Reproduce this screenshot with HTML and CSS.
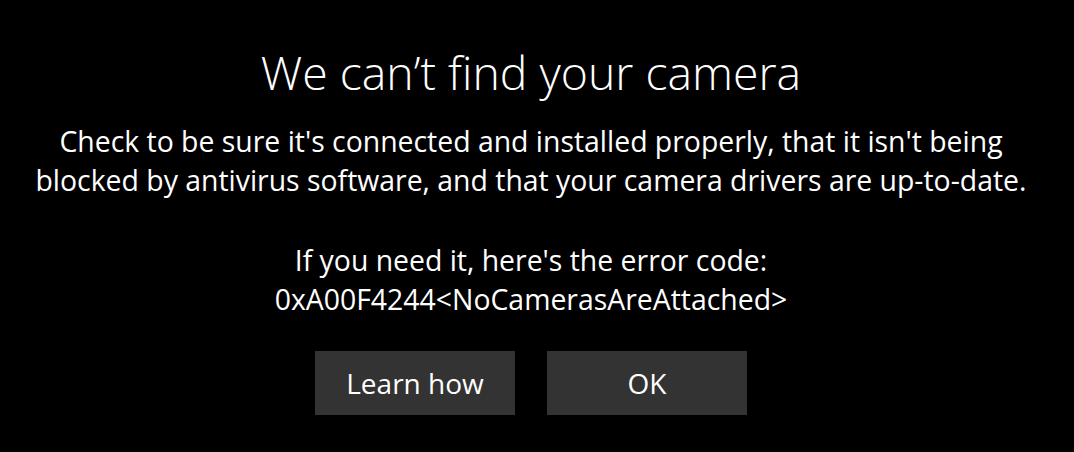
FILE: index.html
```html
<!DOCTYPE html>
<html lang="en">
<head>
<meta charset="utf-8">
<title>Camera</title>
<link rel="stylesheet" href="styles.css">
</head>
<body>
<main class="dialog">
  <h1 class="title">We can’t find your camera</h1>
  <p class="message">Check to be sure it's connected and installed properly, that it isn't being<br>blocked by antivirus software, and that your camera drivers are up-to-date.</p>
  <p class="message code">If you need it, here's the error code:<br>0xA00F4244&lt;NoCamerasAreAttached&gt;</p>
  <div class="actions">
    <button class="btn" type="button">Learn how</button>
    <button class="btn" type="button">OK</button>
  </div>
</main>
</body>
</html>
```

FILE: styles.css
```css
html, body {
  margin: 0;
  padding: 0;
  background: #000;
  height: 100%;
}
body {
  color: #fff;
  font-family: "Open Sans", "Noto Sans", sans-serif;
  overflow: hidden;
}
.dialog {
  display: flex;
  flex-direction: column;
  align-items: center;
  padding: 45px 12px 0 0;
  text-align: center;
}
.title {
  margin: 0;
  font-size: 46.4px;
  font-weight: 300;
  line-height: 55px;
  white-space: nowrap;
}
.message {
  margin: 22px 0 0;
  font-size: 28.4px;
  font-weight: 400;
  line-height: 38.5px;
  white-space: nowrap;
}
.code {
  margin-top: 42px;
}
.actions {
  display: flex;
  gap: 32px;
  margin-top: 33px;
}
.btn {
  width: 200px;
  height: 64px;
  border: 0;
  background: #333333;
  color: #fff;
  font-family: inherit;
  font-size: 28px;
  padding: 0;
  line-height: 1;
}
```
